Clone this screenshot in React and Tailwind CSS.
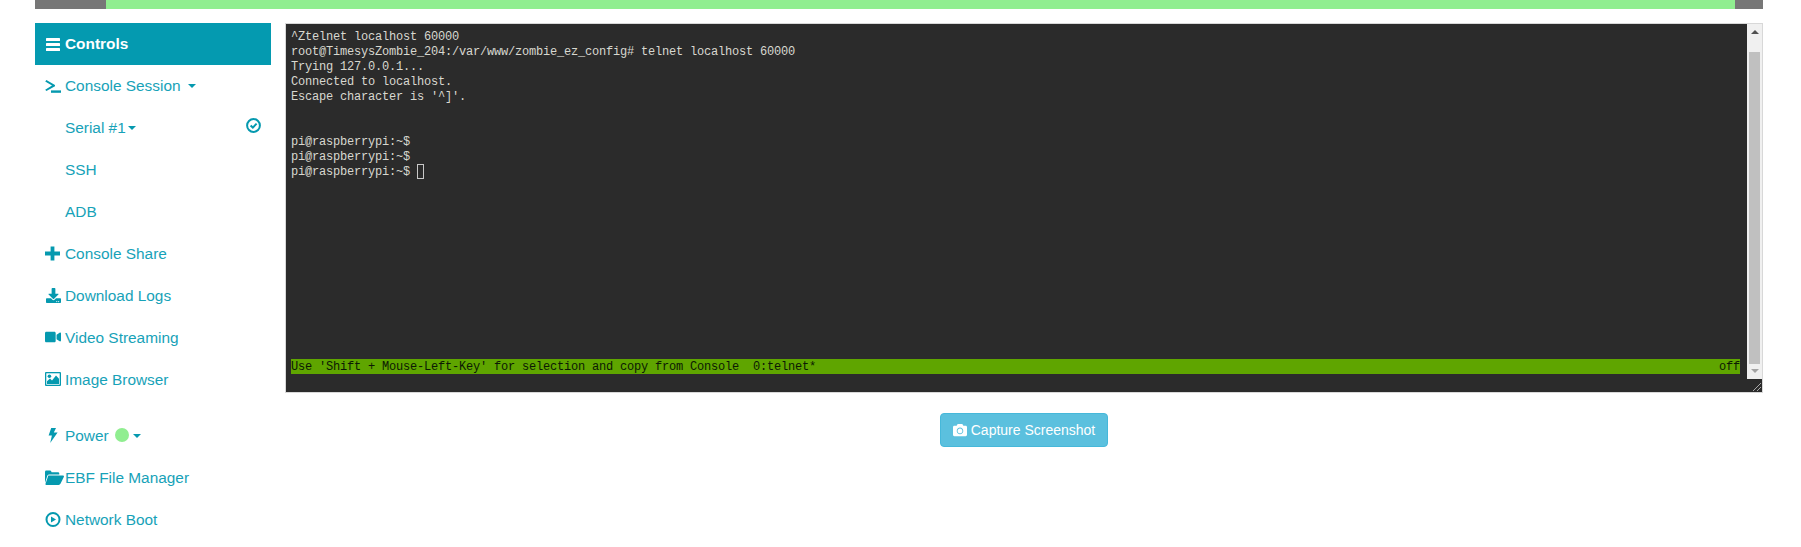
import React from "react";
import { FaDownload, FaVideo, FaCamera } from "react-icons/fa";

const Bars = () => (
  <svg width="14" height="13" viewBox="0 0 14 13" fill="currentColor">
    <rect x="0" y="0" width="14" height="3" rx="0.6" />
    <rect x="0" y="5" width="14" height="3" rx="0.6" />
    <rect x="0" y="10" width="14" height="3" rx="0.6" />
  </svg>
);
const Term = () => (
  <svg width="16" height="13" viewBox="0 0 16 13" fill="currentColor">
    <path d="M0.2 1.4L1.4 0.1L10 4.9V6.3L1.4 11.1L0.2 9.8L7 5.6Z" />
    <rect x="6" y="10.4" width="10" height="2.4" />
  </svg>
);
const CheckO = ({ className }) => (
  <svg className={className} width="15" height="15" viewBox="0 0 15 15" fill="none" stroke="currentColor">
    <circle cx="7.5" cy="7.5" r="6.4" strokeWidth="2" />
    <path d="M4.6 7.6L6.8 9.6L10.6 5.6" strokeWidth="2" />
  </svg>
);
const Plus = () => (
  <svg width="15" height="15" viewBox="0 0 15 15" fill="currentColor">
    <path d="M5.6 0.4H9.4V5.6H15V9.4H9.4V14.6H5.6V9.4H0V5.6H5.6Z" />
  </svg>
);
const Pic = () => (
  <svg width="16" height="14" viewBox="0 0 16 14">
    <rect x="0" y="0" width="16" height="14" rx="1" fill="currentColor" />
    <rect x="1.3" y="1.3" width="13.4" height="11.4" fill="#fff" />
    <circle cx="4.4" cy="4.2" r="1.8" fill="currentColor" />
    <path d="M2 12V9.2L5 6.6L7 8.4L11 3.6L14 6.8V12Z" fill="currentColor" />
  </svg>
);
const Bolt = () => (
  <svg width="10" height="15" viewBox="0 0 10 15" fill="currentColor">
    <path d="M3.2 0H8L5.8 4.6H9.6L2.2 15L3.9 7.6H0.6Z" />
  </svg>
);
const Folder = () => (
  <svg width="19" height="15" viewBox="0 0 19 15" fill="currentColor">
    <path d="M0 13V2Q0 0.6 1.3 0.6H5Q6 0.6 6.3 1.6L6.6 2.2H13Q14.3 2.2 14.3 3.6V4.4H4.2Q3 4.4 2.4 5.4Z" />
    <path d="M3.4 5.6H18Q19.4 5.6 18.8 6.9L15.6 13.6Q15 15 13.6 15H1.4Q0 15 0.6 13.6L3 6.4Q3.1 5.6 3.4 5.6Z" />
  </svg>
);
const PlayO = () => (
  <svg width="16" height="15" viewBox="0 0 16 15" fill="none">
    <circle cx="8" cy="7.5" r="6.5" stroke="currentColor" strokeWidth="2" />
    <path d="M6 4.4L11 7.5L6 10.6Z" fill="currentColor" />
  </svg>
);

const Caret = ({ className = "" }) => (
  <span className={"inline-block w-0 h-0 border-x-4 border-x-transparent border-t-4 border-t-[#0599af] " + className} />
);

const Item = ({ icon, children, className = "" }) => (
  <a className={"flex items-center h-[42px] pl-[10px] text-[15.4px] text-[#17a2b8] " + className}>
    <span className="w-[20px] shrink-0 flex items-center text-[#0599af]">{icon}</span>
    {children}
  </a>
);

const lines = [
  "^Ztelnet localhost 60000",
  "root@TimesysZombie_204:/var/www/zombie_ez_config# telnet localhost 60000",
  "Trying 127.0.0.1...",
  "Connected to localhost.",
  "Escape character is '^]'.",
  "",
  "",
  "pi@raspberrypi:~$",
  "pi@raspberrypi:~$",
];

function Terminal() {
  return (
    <div className="relative h-[370px] border border-[#d8d8d8] bg-[#2b2b2b] flex font-['Liberation_Mono',monospace] text-[12px] tracking-[-0.2px] leading-[17px] text-[#d8d8d0]">
      <div className="flex-1 pl-[5px] pr-[7px] pt-[5px] min-w-0">
        {lines.map((l, i) => (
          <div key={i} className="h-[15px] whitespace-pre">{l}</div>
        ))}
        <div className="h-[15px] whitespace-pre flex items-start">
          <span>pi@raspberrypi:~$ </span>
          <span className="inline-block w-[7px] h-[15px] border border-[#c8c8c8]" />
        </div>
        <div className="h-[180px]" />
        <div className="h-[15px] whitespace-pre flex items-start justify-between bg-[#5fa500] text-[#0c1a04]">
          <span>Use 'Shift + Mouse-Left-Key' for selection and copy from Console  0:telnet*</span>
          <span>off</span>
        </div>
      </div>
      <div className="w-[15px] h-[355px] bg-[#f0f0f0] flex flex-col items-center shrink-0">
        <div className="h-[28px] pt-[6px]">
          <span className="block w-0 h-0 border-x-[4px] border-x-transparent border-b-[4px] border-b-[#505050]" />
        </div>
        <div className="w-[11px] h-[312px] bg-[#c0c0c0]" />
        <div className="pt-[5px]">
          <span className="block w-0 h-0 border-x-[4px] border-x-transparent border-t-[4px] border-t-[#a3a3a3]" />
        </div>
      </div>
      <svg className="absolute right-[1px] bottom-[1px]" width="8" height="8" viewBox="0 0 8 8">
        <path d="M0 8L8 0M4 8L8 4" stroke="#a8a8a8" strokeWidth="1" />
      </svg>
    </div>
  );
}

export default function App() {
  return (
    <div className="w-[1801px] h-[547px] overflow-hidden bg-white font-['Liberation_Sans',sans-serif]">
      <div className="ml-[35px] w-[1728px] h-[9px] bg-[#777777] flex">
        <div className="w-[71px]" />
        <div className="w-[1629px] bg-[#90ee90]" />
      </div>
      <div className="ml-[35px] mt-[14px] w-[1728px] flex gap-[14px]">
        <nav className="w-[236px] shrink-0">
          <div className="h-[42px] pl-[10px] flex items-center bg-[#049ab0] text-white font-bold text-[15.4px]">
            <span className="w-[20px] shrink-0 flex items-center pl-[1px]"><Bars /></span>
            Controls
          </div>
          <Item icon={<Term />}>Console Session<Caret className="ml-[7px]" /></Item>
          <div className="relative">
            <Item>Serial #1<Caret className="ml-[2px]" /></Item>
            <CheckO className="absolute left-[211px] top-[11px] text-[#0599af]" />
          </div>
          <Item>SSH</Item>
          <Item>ADB</Item>
          <Item icon={<span className="-mt-[1px]"><Plus /></span>}>Console Share</Item>
          <Item icon={<span className="pl-[1px] -mt-[1px]"><FaDownload size={15} /></span>}>Download Logs</Item>
          <Item icon={<span className="-mt-[3px]"><FaVideo size={16} /></span>}>Video Streaming</Item>
          <Item icon={<span className="-mt-[3px]"><Pic /></span>}>Image Browser</Item>
          <Item icon={<span className="pl-[3px] -mt-[2px]"><Bolt /></span>} className="mt-[14px]">
            Power
            <span className="inline-block w-[14px] h-[14px] rounded-full bg-[#90ee90] ml-[6px] -mt-[3px]" />
            <Caret className="ml-[4px]" />
          </Item>
          <Item icon={<span className="-mt-[1px]"><Folder /></span>}>EBF File Manager</Item>
          <Item icon={<span className="-mt-[2px]"><PlayO /></span>}>Network Boot</Item>
        </nav>
        <main className="flex-1 min-w-0">
          <Terminal />
          <div className="mt-[20px] flex justify-center">
            <button className="w-[168px] h-[34px] flex items-center justify-center gap-[4px] rounded-[4px] bg-[#5bc0de] border border-[#46b8da] text-white text-[14px]">
              <FaCamera size={14} />
              Capture Screenshot
            </button>
          </div>
        </main>
      </div>
    </div>
  );
}
